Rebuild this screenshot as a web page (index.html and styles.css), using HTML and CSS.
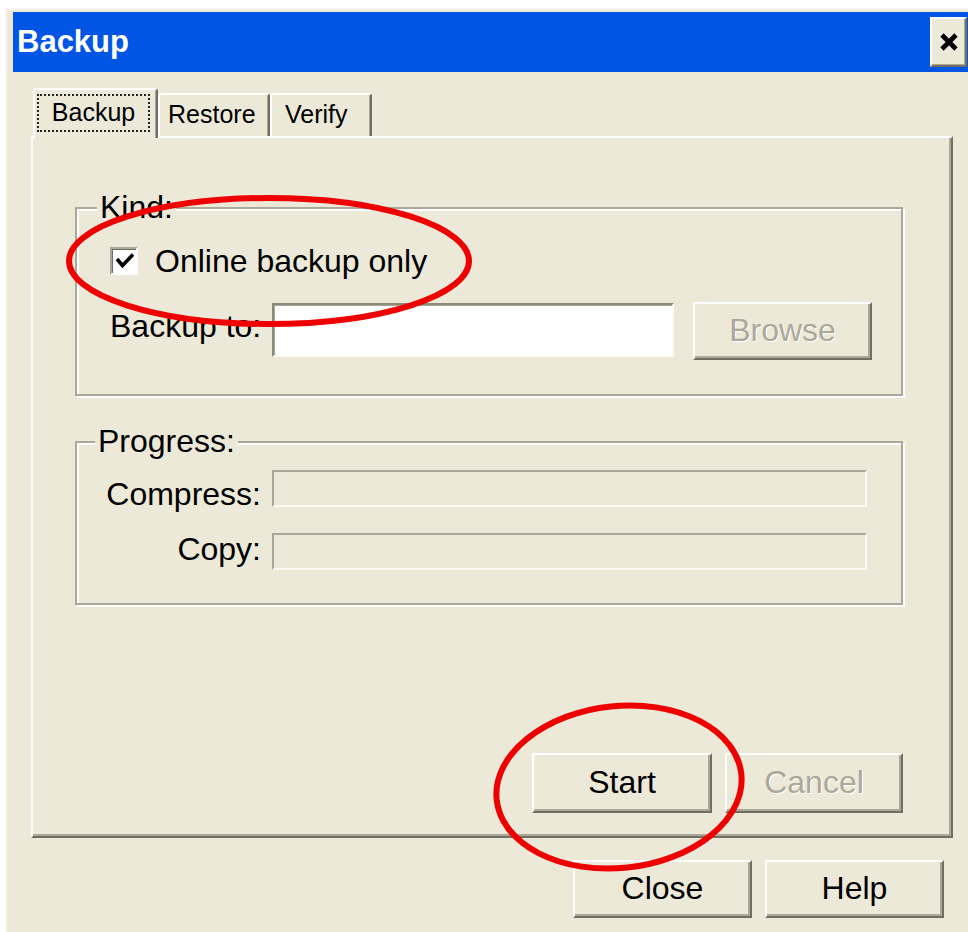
FILE: index.html
```html
<!DOCTYPE html>
<html lang="en">
<head>
<meta charset="utf-8">
<title>Backup</title>
<link rel="stylesheet" href="styles.css">
</head>
<body>
<div class="window">
  <div class="titlebar">
    <span class="title">Backup</span>
    <button class="close" type="button" aria-label="Close">
      <svg width="20" height="20" viewBox="0 0 20 20"><path d="M3 3 L17 17 M17 3 L3 17" stroke="#000" stroke-width="4.6" fill="none"/></svg>
    </button>
  </div>
  <div class="client">
    <div class="tabs">
      <div class="tab active"><span class="focus">Backup</span></div>
      <div class="tab restore">Restore</div>
      <div class="tab verify">Verify</div>
    </div>
    <div class="panel">
      <div class="group kind">
        <span class="legend">Kind:</span>
        <label class="check">
          <span class="box"><svg width="24" height="24" viewBox="0 0 24 24"><polyline points="5,10 10.5,16.5 21,5.5" fill="none" stroke="#000" stroke-width="3.6"/></svg></span>
          Online backup only
        </label>
        <div class="pathrow">
          <span class="lbl">Backup to:</span>
          <span class="input"></span>
          <button class="btn browse" type="button" disabled>Browse</button>
        </div>
      </div>
      <div class="group progress">
        <span class="legend">Progress:</span>
        <div class="bar-row first">
          <span class="lbl">Compress:</span>
          <span class="bar"></span>
        </div>
        <div class="bar-row second">
          <span class="lbl">Copy:</span>
          <span class="bar"></span>
        </div>
      </div>
      <div class="actions">
        <button class="btn start" type="button">Start</button>
        <button class="btn cancel" type="button" disabled>Cancel</button>
      </div>
    </div>
    <div class="footer">
      <button class="btn" type="button">Close</button>
      <button class="btn" type="button">Help</button>
    </div>
  </div>
</div>
<svg class="marks" width="968" height="932" viewBox="0 0 968 932">
  <ellipse cx="269" cy="261" rx="200" ry="63" fill="none" stroke="#ee0000" stroke-width="6"/>
  <ellipse cx="619" cy="787" rx="123" ry="81" fill="none" stroke="#ee0000" stroke-width="6" transform="rotate(-6 619 787)"/>
</svg>
</body>
</html>
```
FILE: styles.css
```css
* { box-sizing: border-box; }

html, body {
  margin: 0;
  height: 100%;
}

body {
  background: #fff;
  font-family: "Liberation Sans", Arial, sans-serif;
  color: #000;
  overflow: hidden;
  position: relative;
}

/* dialog frame */
.window {
  margin: 8px 0 0 5px;
  height: calc(100vh - 8px);
  border-top: 2px solid #f7f5ee;
  border-left: 2px solid #f7f5ee;
  padding: 2px 0 0 6px;
  background: #ece9d8;
  display: flex;
  flex-direction: column;
}

.titlebar {
  height: 60px;
  flex-shrink: 0;
  background: #0055e5;
  display: flex;
  align-items: center;
  justify-content: space-between;
  padding: 0 1px 0 4px;
}

.title {
  color: #fff;
  font-weight: bold;
  font-size: 31px;
  line-height: 60px;
}

.close {
  width: 37px;
  height: 50px;
  padding: 0;
  background: #ece9d8;
  border: 2px solid;
  border-color: #fff #716f64 #716f64 #fff;
  box-shadow: inset -1px -1px 0 #aca899;
  display: flex;
  align-items: center;
  justify-content: center;
}

.client {
  flex: 1;
  padding: 16px 15px 0 18px;
  display: flex;
  flex-direction: column;
}

/* tab strip */
.tabs {
  display: flex;
  align-items: flex-end;
  height: 48px;
  padding-left: 2px;
  position: relative;
  z-index: 1;
  flex-shrink: 0;
}

.tab {
  height: 43px;
  background: #ece9d8;
  border: 2px solid;
  border-bottom: none;
  border-color: #fff #716f64 transparent #fff;
  border-radius: 3px 3px 0 0;
  box-shadow: inset -1px 0 0 #aca899;
  font-size: 25px;
  line-height: 39px;
  white-space: nowrap;
}

.tab.restore { width: 112px; padding-left: 8px; }
.tab.verify { width: 102px; padding-left: 13px; }

.tab.active {
  width: 125px;
  height: 50px;
  margin-bottom: -2px;
  padding: 4px 0 0 2px;
}

.focus {
  display: block;
  width: 113px;
  height: 38px;
  border: 2px dotted #222;
  line-height: 32px;
  text-align: center;
}

/* tab page */
.panel {
  height: 702px;
  flex-shrink: 0;
  border: 2px solid;
  border-color: #fff #716f64 #716f64 #fff;
  box-shadow: inset -2px -2px 0 #aca899;
  padding: 69px 48px 23px 42px;
  display: flex;
  flex-direction: column;
  font-size: 32px;
  line-height: 32px;
}

/* etched group boxes */
.group {
  border: 2px solid #aca899;
  box-shadow: inset 2px 2px 0 #fff, 2px 2px 0 #fff;
  display: flex;
  flex-direction: column;
  align-items: flex-start;
}

.legend {
  margin: -18px 0 0 20px;
  padding: 0 3px;
  background: #ece9d8;
}

.kind { padding-bottom: 34px; }

.progress {
  margin-top: 45px;
  padding-bottom: 33px;
}

.progress .legend { margin-left: 18px; }

.check {
  display: flex;
  align-items: center;
  margin: 22px 0 0 33px;
}

.box {
  width: 28px;
  height: 28px;
  margin-right: 17px;
  background: #fff;
  border: 2px solid;
  border-color: #aca899 #fff #fff #aca899;
  box-shadow: inset 1px 1px 0 #716f64;
  display: flex;
}

.pathrow {
  display: flex;
  align-items: flex-start;
  margin: 25px 0 0 33px;
}

.pathrow .lbl {
  width: 162px;
  margin-top: 8px;
}

.input {
  width: 402px;
  height: 54px;
  margin-top: 1px;
  background: #fff;
  border: 2px solid;
  border-color: #8d8a7a #fbfaf5 #fbfaf5 #8d8a7a;
  box-shadow: inset 1px 1px 0 #a7a595;
}

.bar-row {
  display: flex;
  align-items: flex-start;
}

.bar-row.first { margin-top: 13px; }
.bar-row.first .lbl { margin-top: 8px; }
.bar-row.second { margin-top: 23px; }

.bar-row .lbl {
  width: 184px;
  margin-right: 11px;
  text-align: right;
}

.bar {
  width: 595px;
  height: 37px;
  border: 2px solid;
  border-color: #aca899 #fbfaf5 #fbfaf5 #aca899;
}

/* push buttons */
.btn {
  font-family: "Liberation Sans", Arial, sans-serif;
  font-size: 32px;
  line-height: 32px;
  color: #000;
  background: #ece9d8;
  border: 2px solid;
  border-color: #fff #716f64 #716f64 #fff;
  box-shadow: inset -2px -2px 0 #aca899;
  padding: 0 0 2px;
  display: flex;
  align-items: center;
  justify-content: center;
}

.btn:disabled {
  color: #aca899;
  text-shadow: 1px 1px 0 #fff;
}

.browse {
  width: 179px;
  height: 58px;
  margin-left: 19px;
}

.actions {
  margin-top: auto;
  display: flex;
  justify-content: flex-end;
  gap: 13px;
}

.actions .start { width: 180px; height: 60px; }
.actions .cancel { width: 178px; height: 60px; }

.footer {
  display: flex;
  justify-content: flex-end;
  gap: 13px;
  margin-top: 22px;
  padding-right: 9px;
}

.footer .btn { width: 179px; height: 58px; }

/* hand-drawn highlight marks */
.marks {
  position: absolute;
  top: 0;
  left: 0;
  pointer-events: none;
}
```
